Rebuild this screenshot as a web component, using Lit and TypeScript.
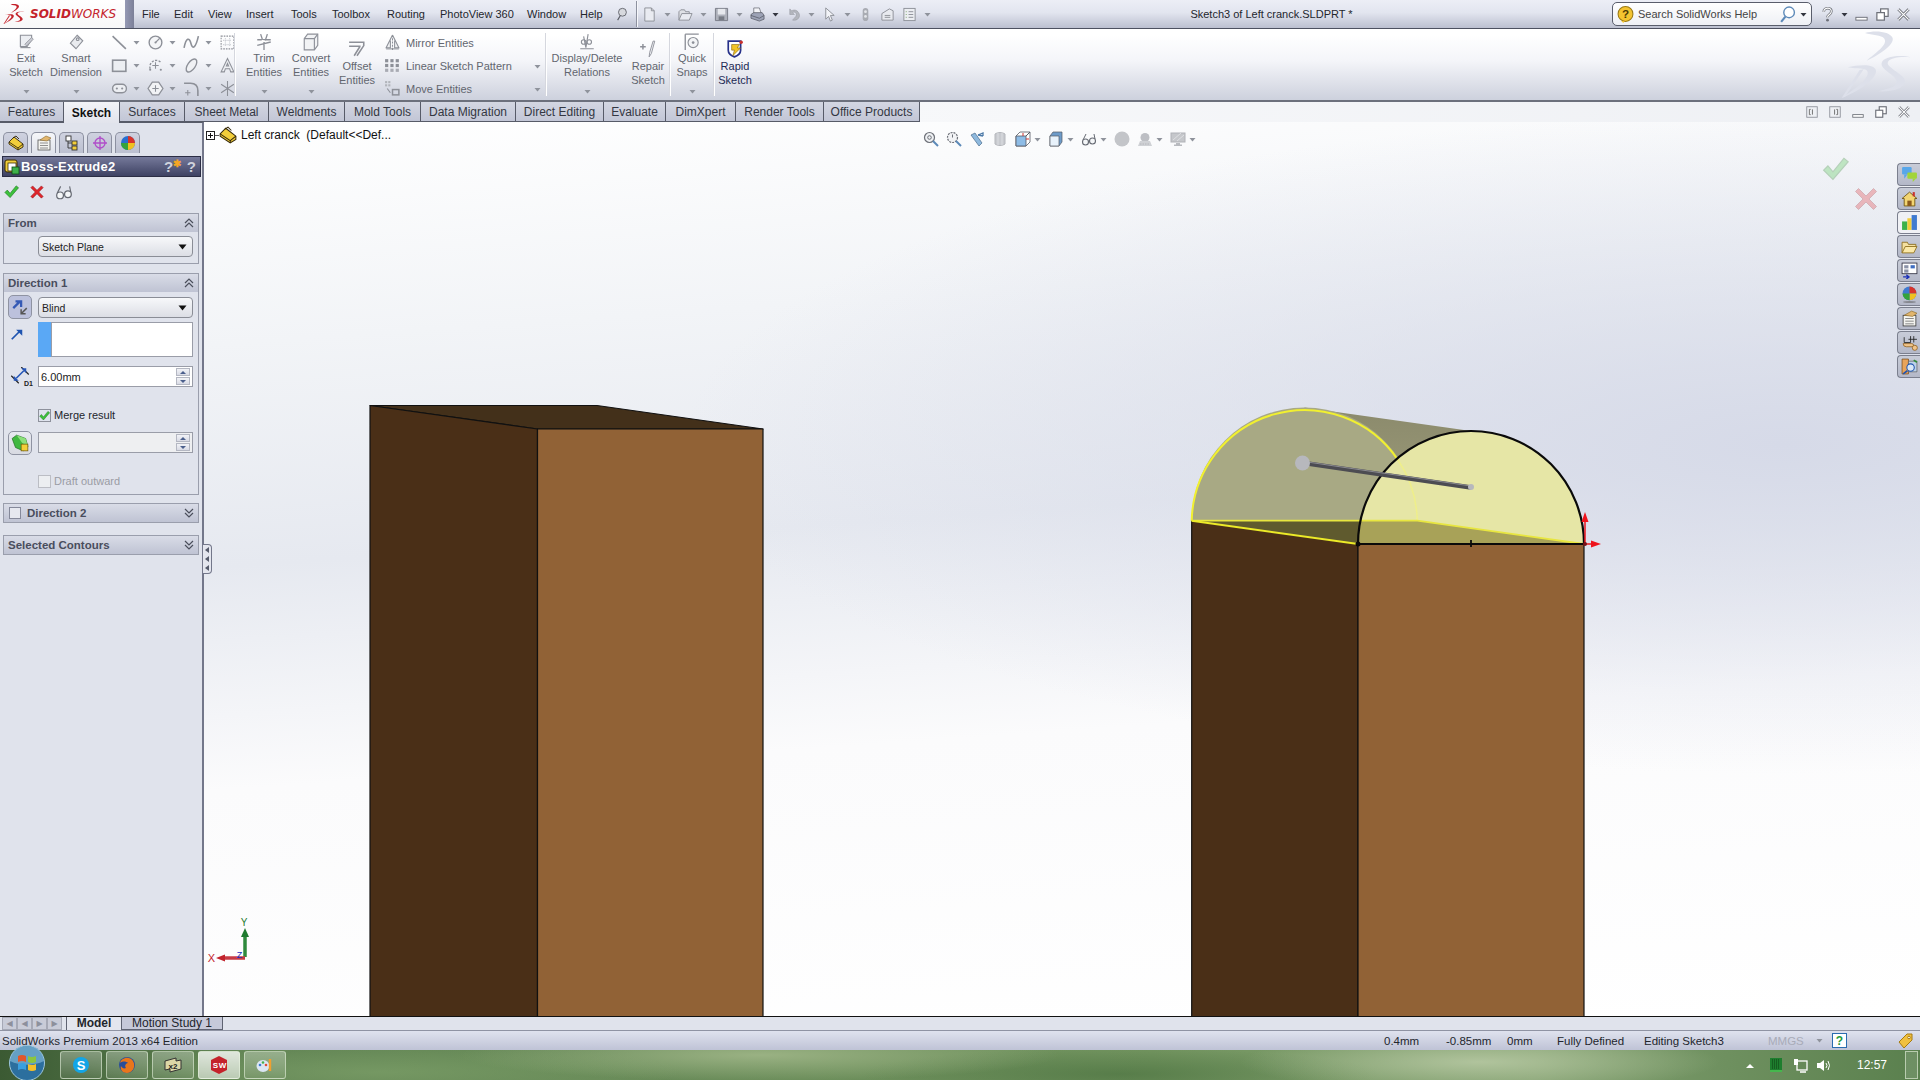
import { LitElement, html, svg, css, SVGTemplateResult } from 'lit';
import { customElement } from 'lit/decorators.js';

// small helpers for the icon set, everything is drawn on a 16 unit box
const ic = (size: number, body: SVGTemplateResult, box = '0 0 16 16') =>
  html`<svg class="ic" width=${size} height=${size} viewBox=${box}>${body}</svg>`;
const caret = html`<svg class="caret" width="7" height="5" viewBox="0 0 7 5"><path d="M0.5 1h6L3.5 4.5z" fill="#8f939c"/></svg>`;
const caretDark = html`<svg class="caret" width="7" height="5" viewBox="0 0 7 5"><path d="M0.5 1h6L3.5 4.5z" fill="#33363f"/></svg>`;
const selCaret = html`<svg class="caret" width="9" height="6" viewBox="0 0 9 6"><path d="M0.5 .5h8L4.500 5.500z" fill="#111"/></svg>`;
const G = '#8d9098';

const chevUp = html`<svg width="12" height="12" viewBox="0 0 12 12" fill="none" stroke="#4b4f5c" stroke-width="1.2"><path d="M2 6l4-4 4 4M2 10l4-4 4 4"/></svg>`;
const chevDown = html`<svg width="12" height="12" viewBox="0 0 12 12" fill="none" stroke="#4b4f5c" stroke-width="1.2"><path d="M2 2l4 4 4-4M2 6l4 4 4-4"/></svg>`;

// the 3DS mark, used red in the title bar and pale in the ribbon
const dsMark = svg`
  <path d="M120 15C150 6 195 10 203 30C208 50 165 80 125 98C150 75 190 50 178 32C170 20 140 22 120 15Z"/>
  <path d="M68 118C100 110 150 106 153 128C155 155 95 192 50 210C85 185 132 155 128 132C125 118 95 124 68 118Z"/>
  <path d="M104 126L116 124L62 204L50 210Z"/>
  <path d="M258 88C225 85 190 90 188 105C187 120 240 140 240 160C240 182 200 192 160 190C190 182 218 176 215 160C212 140 165 125 170 105C175 85 225 80 258 88Z"/>`;

const icons: Record<string, SVGTemplateResult> = {
  exit: svg`<path d="M3 2h10v4l-4 6H3z" fill="#eceef2" stroke=${G}/><path d="M3 13h9" stroke=${G}/><path d="M7 10l6-6 1.5 1.5-6 6z" fill="#c9cbd2" stroke=${G} stroke-width=".7"/>`,
  dim: svg`<path d="M9 2l5 5-6 7-5-5z" fill="#e9ebef" stroke=${G}/><circle cx="9.5" cy="5.5" r="1.2" fill="none" stroke=${G}/>`,
  line: svg`<path d="M1.5 2L14 14" stroke=${G} stroke-width="1.5"/>`,
  circle: svg`<circle cx="8" cy="8" r="6" fill="#f4f5f7" stroke=${G} stroke-width="1.3"/><path d="M8 8l4-4" stroke=${G}/><circle cx="8" cy="8" r="1" fill=${G}/>`,
  spline: svg`<path d="M1 13C3 3 6 3 7.5 9S12 13 14.5 2" fill="none" stroke=${G} stroke-width="1.5"/>`,
  plane: svg`<rect x="2" y="2" width="12" height="12" fill="none" stroke=${G} stroke-dasharray="1.5 1"/><path d="M4 6h8M4 10h8M6 4v8M10 4v8" stroke="#c2c5cc" stroke-dasharray="1 1"/>`,
  rect: svg`<rect x="1.5" y="3" width="12.5" height="10.5" fill="#eceef2" stroke=${G} stroke-width="1.5"/>`,
  arcs: svg`<path d="M3 11A6 6 0 0 1 13 5" fill="none" stroke=${G} stroke-dasharray="2 1.3" stroke-width="1.3"/><path d="M8 5v6M5 8h6" stroke=${G}/><circle cx="3" cy="12" r="1" fill=${G}/><circle cx="13" cy="12" r="1" fill=${G}/>`,
  ell: svg`<ellipse cx="8" cy="8" rx="3.6" ry="7" transform="rotate(35 8 8)" fill="#f0f1f4" stroke=${G} stroke-width="1.3"/>`,
  text: svg`<path d="M8 1.5L2 14h3l1-3h4l1 3h3zM7 8.5L8 6l1 2.5z" fill="#eceef2" stroke=${G}/>`,
  slot: svg`<rect x="1.5" y="4" width="13" height="8" rx="4" fill="#eceef2" stroke=${G} stroke-width="1.3"/><circle cx="5.5" cy="8" r="1" fill=${G}/><circle cx="10.5" cy="8" r="1" fill=${G}/>`,
  hex: svg`<path d="M5 2h6l4 6-4 6H5L1 8z" fill="#f2f3f5" stroke=${G} stroke-width="1.2"/><path d="M8 5v6M5 8h6" stroke=${G}/>`,
  fillet: svg`<path d="M1 3h6q7 0 7 7v5" fill="none" stroke=${G} stroke-width="1.5"/><path d="M2 12h5M4.500 9.500v5" stroke=${G}/>`,
  star: svg`<path d="M8 1v14M2 4l12 8M14 4L2 12" stroke=${G}/>`,
  trim: svg`<path d="M2 6h12M2 11l12-3M5 1l2 6M11 1L9 7M8 8v7" stroke=${G} stroke-width="1.2"/><path d="M6 6.500l4 1" stroke="#fff"/>`,
  conv: svg`<path d="M2 5l3-4h9v10l-3 4H2z" fill="#f2f3f5" stroke=${G}/><path d="M2 5h9v10M11 5l3-4" fill="none" stroke=${G}/>`,
  offset: svg`<path d="M1 2h13v3l-6 9M1 5.500h9.500v.5l-5 8" fill="none" stroke=${G} stroke-width="1.4"/>`,
  mirror: svg`<path d="M8 1L2 13h4V6M8 1l6 12h-4V6" fill="#f1f2f4" stroke=${G}/><path d="M8 1v14" stroke=${G} stroke-dasharray="2 1"/><path d="M2 14h12" stroke=${G}/>`,
  pattern: svg`<g fill=${G}><rect x="1" y="2" width="3" height="3"/><rect x="6" y="2" width="3" height="3"/><rect x="11" y="2" width="3" height="3"/><rect x="1" y="6.500" width="3" height="3"/><rect x="6" y="6.500" width="3" height="3"/><rect x="11" y="6.500" width="3" height="3"/><rect x="1" y="11" width="3" height="3" opacity=".7"/><rect x="6" y="11" width="3" height="3" opacity=".7"/><rect x="11" y="11" width="3" height="3" opacity=".7"/></g>`,
  move: svg`<g fill="#b1b4ba"><rect x="1" y="1" width="2" height="2"/><rect x="4" y="1" width="2" height="2"/><rect x="1" y="4" width="2" height="2"/><rect x="4" y="4" width="2" height="2"/></g><path d="M3 8l3 4" stroke=${G}/><rect x="8" y="9" width="6" height="5" fill="none" stroke=${G} stroke-width="1.4"/>`,
  rel: svg`<path d="M5 3l2 10M9 1l-2 12M2 14h12" stroke=${G} fill="none"/><circle cx="5" cy="8" r="2" fill="none" stroke=${G}/><circle cx="10" cy="8" r="2" fill="none" stroke=${G}/>`,
  repair: svg`<path d="M1 6h5M3.500 3.500v5" stroke=${G} stroke-width="1.3"/><path d="M14 1l-3 11-2 3 .5-4 3-10z" fill="#eceef2" stroke=${G} stroke-width=".8"/>`,
  snap: svg`<path d="M2 1h12M2 1v14" stroke=${G} stroke-width="1.2"/><circle cx="9" cy="8.500" r="4.500" fill="#f3f4f6" stroke=${G}/><circle cx="9" cy="8.500" r="1.200" fill=${G}/>`,
  rapid: svg`<path d="M2 1h11v8c0 3-3 5-5.500 6C5 14 2 12 2 9z" fill="#fff" stroke="#27318a" stroke-width="1.500"/><path d="M5 4h7l-2 3h3l-7 7 1.500-5H5z" fill="#f2c326" stroke="#7c5d08" stroke-width=".5"/><circle cx="13.500" cy="2" r="1.500" fill="#c9302c"/>`,
  pin: svg`<circle cx="8.500" cy="6" r="4.500" fill="#d7d9de" stroke="#5b5e66"/><path d="M6 10l-3 5" stroke="#5b5e66" stroke-width="1.300"/>`,
  newdoc: svg`<path d="M3 1h7l3 3v11H3z" fill="#e9ebf1" stroke=${G}/><path d="M10 1v3h3" fill="none" stroke=${G}/>`,
  open: svg`<path d="M1 14V5l2-2h4l1 2h4v2" fill="#dfe1e6" stroke=${G}/><path d="M1 14l3-7h11l-3 7z" fill="#e9ebf1" stroke=${G}/>`,
  save: svg`<path d="M1.500 1.500h13v13h-13z" fill="#adb0ba" stroke="#777b85"/><rect x="4" y="2" width="8" height="6" fill="#e6e8ed"/><rect x="5" y="10" width="6" height="4" fill="#777b85"/>`,
  print: svg`<path d="M4 1h6l2 6H4z" fill="#f2f3f7" stroke="#5a5d66" stroke-width=".7"/><path d="M1 8l3-2h9l2 3v4l-5 2-9-3z" fill="#9da3b6" stroke="#4b4e58" stroke-width=".7"/><path d="M1 9l9 3 5-3" fill="none" stroke="#4b4e58" stroke-width=".7"/>`,
  undo: svg`<path d="M4 2v6h5L7 6c3-1.500 5 1 3.500 4L7 14c6 1 9-4 6.500-8C11 2.500 8 3 6 4z" fill="#b3b6bd" stroke="#8d9098" stroke-width=".5"/>`,
  select: svg`<path d="M4 1v12l3-3 2 5 2-1-2-5h4z" fill="#f2f3f7" stroke=${G}/>`,
  rebuild: svg`<rect x="5" y="1" width="6" height="14" rx="3" fill="#a9acb3"/><circle cx="8" cy="5" r="1.500" fill="#e4e6ea"/><circle cx="8" cy="10" r="1.500" fill="#e4e6ea"/>`,
  optsIc: svg`<path d="M2 7l8-5 4 2v10H2z" fill="#e8eaef" stroke=${G}/><path d="M5 9h6M5 11h6" stroke=${G}/>`,
  list: svg`<rect x="2" y="1.500" width="12" height="13" fill="#eceef2" stroke=${G}/><path d="M7 5h5M7 8h5M7 11h5" stroke=${G}/><path d="M4 5h1M4 8h1M4 11h1" stroke="#7aa36a"/>`,
  zoomFit: svg`<circle cx="6.500" cy="6.500" r="5" fill="#eef0f3" stroke="#6d7078" stroke-width="1.200"/><circle cx="6.500" cy="6.500" r="1.800" fill="none" stroke="#6d7078"/><path d="M10 10l5 5" stroke="#5c89b8" stroke-width="2"/>`,
  zoomArea: svg`<circle cx="6.500" cy="6.500" r="5" fill="#f2f3f5" stroke="#6d7078" stroke-width="1.200" stroke-dasharray="2 1"/><path d="M6.500 3.500v3" stroke="#6d7078"/><path d="M10 10l5 5" stroke="#5c89b8" stroke-width="2"/>`,
  prevView: svg`<path d="M2 4l4-2 7 10-3 3z" fill="#8eb9de" stroke="#4a6b8c" stroke-width=".7"/><path d="M9 4l5-2v3M9 4l5 1" stroke="#4d7aa8" fill="none" stroke-width="1.300"/>`,
  section: svg`<path d="M3 3c3-2 7-2 10 0v10c-3 2-7 2-10 0z" fill="#c8cacf" stroke="#b5b7bc"/><path d="M6 2v12M10 2v12" stroke="#dcdee2"/>`,
  orient: svg`<path d="M1 5l4-4h10v10l-4 4H1z" fill="#fff" stroke="#555963" stroke-width=".8"/><path d="M1 5h10v10H1z" fill="#8ebce6" stroke="#555963" stroke-width=".8"/><path d="M11 5l4-4" stroke="#555963"/><path d="M8 2v3M11 8h3" stroke="#c33"/>`,
  disp: svg`<path d="M2 5l3-4h9v10l-3 4H2z" fill="#6d9bc9" stroke="#555963" stroke-width=".7"/><path d="M2 5h9v10H2z" fill="#e8f2fb" stroke="#555963" stroke-width=".7"/>`,
  glasses: svg`<circle cx="4.500" cy="11" r="3" fill="#f4f6f8" stroke="#666a73" stroke-width="1.100"/><circle cx="11.500" cy="10" r="3" fill="#f4f6f8" stroke="#666a73" stroke-width="1.100"/><path d="M2 9l3-6M7.500 10h1M14 8l-1-5" fill="none" stroke="#666a73"/>`,
  ball: svg`<circle cx="8" cy="8" r="7.500" fill="#c3c5c9"/>`,
  scene: svg`<circle cx="8" cy="6.500" r="4.500" fill="#bdbfc4"/><path d="M1 15l2-5h10l2 5z" fill="#cfd1d5"/><path d="M3 13h10" stroke="#b4b6bb" stroke-dasharray="1.500 1"/>`,
  monitor: svg`<rect x="1" y="2" width="14" height="9" fill="#c5c7cb" stroke="#b0b2b7"/><path d="M3 9l8-7M7 10l7-6" stroke="#dfe0e3"/><path d="M6 12h4v1.500h2V15H4v-1.500h2z" fill="#b8babf"/>`,
  winL: svg`<rect x="2" y="2" width="12" height="12" fill="#eef0f4" stroke=${G}/><path d="M6.500 5L5 5v6h1.500M8.500 5v6" fill="none" stroke="#666"/>`,
  winR: svg`<rect x="2" y="2" width="12" height="12" fill="#eef0f4" stroke=${G}/><path d="M9.500 5H11v6H9.500M7.500 5v6" fill="none" stroke="#666"/>`,
  min: svg`<rect x="2" y="11" width="12" height="3" fill="#fff" stroke="#6d7078"/>`,
  restore: svg`<rect x="6" y="2" width="8" height="8" fill="#fff" stroke="#6d7078" stroke-width="1.300"/><rect x="2" y="6" width="8" height="8" fill="#fff" stroke="#6d7078" stroke-width="1.300"/>`,
  close: svg`<path d="M2.500 2.500l11 11M13.500 2.500l-11 11" stroke="#6d7078" stroke-width="3"/><path d="M2.500 2.500l11 11M13.500 2.500l-11 11" stroke="#fff" stroke-width="1.300"/>`,
  helpQ: svg`<path d="M4 5c0-5 9-5 8 0 0 3-4 3-4 6" fill="none" stroke="#6d7078" stroke-width="2.800"/><path d="M4 5c0-5 9-5 8 0 0 3-4 3-4 6" fill="none" stroke="#fff" stroke-width="1.200"/><circle cx="8" cy="14" r="1.500" fill="#6d7078"/>`,
  bulb: svg`<circle cx="8" cy="7.500" r="7" fill="#f4c430" stroke="#9a7a14"/><text x="8" y="11.500" font-size="11" font-weight="700" text-anchor="middle" fill="#4b3b05" font-family="Liberation Sans">?</text><path d="M4 14l2 2 1-2z" fill="#f4c430"/>`,
  lens: svg`<circle cx="9.500" cy="6" r="5" fill="#fff" stroke="#5c89b8" stroke-width="1.300"/><path d="M6 10l-4 5" stroke="#5c89b8" stroke-width="2"/>`,
  block: svg`<path d="M1 7l5-5 9 7v3l-5 3-9-6z" fill="#f2ce3a" stroke="#33270a" stroke-width=".9"/><path d="M1 7l9 6 5-4M10 13v2M5 3l3-2 3 3" fill="none" stroke="#33270a" stroke-width=".9"/>`,
  prop: svg`<rect x="2" y="5" width="12" height="10" fill="#f4f4f0" stroke="#555" stroke-width=".8"/><path d="M4 8h8M4 10.500h8M4 13h8" stroke="#777" stroke-width=".8"/><path d="M4 5l6-4 5 2-4 3z" fill="#e2b66e" stroke="#8b6a2a" stroke-width=".6"/>`,
  config: svg`<rect x="2" y="1" width="5" height="5" fill="#fff" stroke="#333" stroke-width=".9"/><rect x="8" y="6" width="5" height="4" fill="#f2ce3a" stroke="#333" stroke-width=".9"/><rect x="8" y="11" width="5" height="4" fill="#f2ce3a" stroke="#333" stroke-width=".9"/><path d="M4 6v7h4M4 8h4" fill="none" stroke="#333" stroke-width=".9"/>`,
  target: svg`<circle cx="8" cy="8" r="5" fill="none" stroke="#b04ec9" stroke-width="1.300"/><path d="M8 1v14M1 8h14" stroke="#b04ec9" stroke-width="1.300"/>`,
  colors: svg`<circle cx="8" cy="8" r="7" fill="#2a6fd0"/><path d="M8 8V1a7 7 0 0 1 7 7z" fill="#d7342b"/><path d="M8 8h7a7 7 0 0 1-7 7z" fill="#f0c020"/><path d="M8 8v7a7 7 0 0 1-7-7z" fill="#35a33a"/>`,
  boss: svg`<rect x="1" y="1" width="12" height="12" rx="2" fill="#f2ce3a" stroke="#3a2d05"/><rect x="4" y="4" width="8" height="8" fill="#fff" stroke="#3a2d05" stroke-width=".8"/><rect x="8" y="8" width="7" height="7" fill="#3db14a" stroke="#0e4a16" stroke-width=".8"/>`,
  ok: svg`<path d="M1 9l2.500-2.500L6.500 10 13 2l2.500 2L6.500 14.500z" fill="#3cc23c" stroke="#1d7a1d" stroke-width=".7"/>`,
  no: svg`<path d="M3 1l5 5 5-5 2 2-5 5 5 5-2 2-5-5-5 5-2-2 5-5-5-5z" fill="#e0252b" stroke="#8e1015" stroke-width=".6"/>`,
  arrowsDir: svg`<path d="M2 9l6-6M4 3h5v5" fill="none" stroke="#3559b5" stroke-width="2"/><path d="M14 9l-5 5M13 14H9v-4" fill="none" stroke="#555" stroke-width="1.300"/>`,
  arrowBlue: svg`<path d="M2 14l10-10" stroke="#1f54b0" stroke-width="2"/><path d="M7 3h7v7z" fill="#1f54b0"/>`,
  d1: svg`<path d="M1 7l6 6M9 0l6 6" stroke="#222" stroke-width=".9"/><path d="M5 9l6-6" stroke="#2656b8" stroke-width="1.300"/><path d="M3 11l4 0-4-4zM13 1l-4 0 4 4z" fill="#2656b8"/>`,
  green: svg`<path d="M1 4l4-3 8 3 2 7-4 4-7-3z" fill="#41b841" stroke="#1f6b1f" stroke-width=".6"/><path d="M5 1l8 3 2 7-5-3z" fill="#8ce07a"/><rect x="9" y="9" width="6" height="6" fill="#f2ce3a" stroke="#6a5305" stroke-width=".6"/>`,
  chat: svg`<rect x="1" y="1" width="9" height="7" rx="1" fill="#58a7ea"/><path d="M3 8v4l3-4z" fill="#58a7ea"/><rect x="6" y="6" width="9" height="6" rx="1" fill="#a2d43a"/><path d="M11 12v3l3-3z" fill="#a2d43a"/>`,
  home: svg`<path d="M8 2L1 8h2v7h10V8h2z" fill="#f2d572" stroke="#6d5209" stroke-width=".8"/><rect x="11" y="2" width="2" height="4" fill="#c9302c"/><rect x="6" y="10" width="4" height="5" fill="#8c5a1c"/>`,
  library: svg`<rect x="1" y="7" width="5" height="8" fill="#3db14a"/><rect x="6" y="4" width="4" height="11" fill="#f2ce3a"/><rect x="10" y="1" width="5" height="14" fill="#3f7ad0"/>`,
  folder: svg`<path d="M1 14V4h5l1 2h7v2" fill="#f4e0a0" stroke="#8a6a18" stroke-width=".8"/><path d="M1 14l3-6h11l-3 6z" fill="#fbe9a8" stroke="#8a6a18" stroke-width=".8"/>`,
  views: svg`<rect x="1" y="1" width="14" height="10" fill="#fff" stroke="#334" stroke-width=".8"/><rect x="3" y="3" width="4" height="3" fill="#8c93a8"/><rect x="9" y="3" width="4" height="3" fill="#3f6ec2"/><rect x="3" y="7" width="4" height="3" fill="#8c93a8"/><path d="M2 14h5M5 12l2.500 2L5 16" stroke="#1b2fb8" stroke-width="1.300" fill="none"/>`,
  appearance: svg`<circle cx="8" cy="7" r="6.500" fill="#3f7ad0"/><path d="M8 7V.5A6.500 6.500 0 0 1 14.500 7z" fill="#d7342b"/><path d="M8 7h6.500A6.500 6.500 0 0 1 8 13.500z" fill="#f0c020"/><path d="M8 7v6.500A6.500 6.500 0 0 1 1.500 7z" fill="#35a33a"/><ellipse cx="8" cy="15" rx="6" ry="1" fill="#555" opacity=".5"/>`,
  custom: svg`<rect x="2" y="5" width="12" height="10" fill="#f4f4f0" stroke="#444" stroke-width=".8"/><path d="M4 8h8M4 10.500h8M4 13h8" stroke="#777" stroke-width=".8"/><path d="M3 5l7-4 5 2-4 3z" fill="#e2b66e" stroke="#8b6a2a" stroke-width=".6"/>`,
  sensor: svg`<path d="M3 3v5h6M9 2v6M12 2v6M7 5h8" stroke="#222" fill="none" stroke-width=".8"/><path d="M2 9h8q2 0 2 2v1H5q-3 0-3-3z" fill="#f1c489" stroke="#8a5a1a" stroke-width=".7"/><circle cx="13" cy="13" r="2.400" fill="#f1c489" stroke="#8a5a1a" stroke-width=".7"/>`,
  search: svg`<path d="M1 1h6v14H1z" fill="#e8a45a" stroke="#7a4a17" stroke-width=".7"/><path d="M7 3h8v10H7z" fill="#bcd1e8" stroke="#555" stroke-width=".6"/><circle cx="9" cy="9" r="3.500" fill="#d9e8f6" stroke="#1f54b0"/><path d="M6 12l-4 3" stroke="#1f54b0" stroke-width="1.500"/><path d="M12 2l3 2" stroke="#2f8b3a" stroke-width="1.500"/>`,
};

const menu: [string, number][] = [['File', 32], ['Edit', 34], ['View', 38], ['Insert', 45], ['Tools', 41], ['Toolbox', 55], ['Routing', 53], ['PhotoView 360', 87], ['Window', 53], ['Help', 42]];
const tabs: [string, number][] = [['Features', 64], ['Sketch', 56], ['Surfaces', 65], ['Sheet Metal', 84], ['Weldments', 76], ['Mold Tools', 76], ['Data Migration', 95], ['Direct Editing', 88], ['Evaluate', 62], ['DimXpert', 70], ['Render Tools', 88], ['Office Products', 96]];
const quick: [string, boolean][] = [['newdoc', true], ['open', true], ['save', true], ['print', true], ['undo', true], ['select', true], ['rebuild', false], ['optsIc', false], ['list', true]];
const huds: [string, boolean][] = [['zoomFit', false], ['zoomArea', false], ['prevView', false], ['section', false], ['orient', true], ['disp', true], ['glasses', true], ['ball', false], ['scene', true], ['monitor', true]];
const pane = ['chat', 'home', 'library', 'folder', 'views', 'appearance', 'custom', 'sensor', 'search'];
const grid = [['line', 'circle', 'spline', 'plane'], ['rect', 'arcs', 'ell', 'text'], ['slot', 'hex', 'fillet', 'star']];

@customElement('app-root')
export class AppRoot extends LitElement {
  static styles = css`
    :host { display: block; width: 1920px; height: 1080px; overflow: hidden; font-family: "Liberation Sans", "DejaVu Sans", sans-serif; font-size: 12px; color: #23262d; }
    .app { display: flex; flex-direction: column; width: 1920px; height: 1080px; }
    svg.ic { display: block; flex: none; }
    svg.caret { display: block; flex: none; }

    .title { height: 28px; flex: none; display: flex; align-items: center; font-size: 11px; background: linear-gradient(#eceef6, #e2e5ef 45%, #bcc0d0); border-bottom: 1px solid #4d5160; }
    .logo { width: 125px; height: 28px; flex: none; display: flex; align-items: center; gap: 5px; padding-left: 3px; box-sizing: border-box; background: linear-gradient(#fff, #f7f7f8); color: #c4222b; font: italic 400 12px "DejaVu Sans", sans-serif; white-space: nowrap; }
    .logo b { font-weight: 700; }
    .logo svg { fill: #c4222b; flex: none; }
    .strip { width: 9px; height: 28px; flex: none; margin-right: 8px; background: linear-gradient(90deg, #9599b4, #7c8098); }
    .menu { display: flex; align-items: center; height: 100%; }
    .menu span { display: block; }
    .pin { width: 14px; margin: 0 7px 0 -7px; }
    .vsep { width: 1px; height: 26px; background: #8d919f; border-right: 1px solid #f6f7fb; }
    .quick { display: flex; align-items: center; gap: 3px; }
    .q { display: flex; align-items: center; gap: 7px; padding-left: 4px; }
    .doc { flex: 1; text-align: center; white-space: nowrap; }
    .search { width: 200px; height: 24px; flex: none; box-sizing: border-box; display: flex; align-items: center; gap: 4px; padding: 0 4px; background: linear-gradient(#fff, #eef0f5); border: 1px solid #5a5e6c; border-radius: 5px; color: #444; white-space: nowrap; }
    .search .grow { flex: 1; }
    .wins { display: flex; align-items: center; gap: 6px; padding: 0 9px 0 8px; }

    .ribbon { height: 71px; flex: none; display: flex; font-size: 11px; background: linear-gradient(#fff 8%, #f4f5f9 45%, #cdd1dd); border-bottom: 2px solid #6c707c; position: relative; color: #62666f; line-height: 14px; text-align: center; }
    .tool { flex: none; display: flex; flex-direction: column; align-items: center; padding-top: 4px; box-sizing: border-box; position: relative; }
    .tool .lbl { white-space: nowrap; }
    .tool svg.caret { position: absolute; bottom: 6px; left: 50%; margin-left: -3px; }
    .tool.low { padding-top: 11px; }
    .tool.low .lbl { margin-top: 1px; }
    .tool.active { color: #1d2a55; }
    .sep { flex: none; width: 1px; margin: 4px 0; background: #d5d7de; border-right: 1px solid #fff; }
    .grid { flex: none; width: 123px; display: grid; grid-template-columns: 36px 36px 36px auto; grid-auto-rows: 23px; padding-top: 2px; box-sizing: border-box; margin-left: 11px; }
    .cell { display: flex; align-items: center; gap: 5px; }
    .stack { flex: none; width: 161px; display: flex; flex-direction: column; position: relative; padding-top: 2px; box-sizing: border-box; }
    .stack .row { height: 23px; display: flex; align-items: center; gap: 5px; white-space: nowrap; }
    .stack .c1, .stack .c2 { position: absolute; right: 4px; }
    .stack .c1 { top: 35px; }
    .stack .c2 { top: 58px; }
    .mark { position: absolute; right: 0; top: -1px; fill: #dde0ea; }

    .tabs { height: 20px; flex: none; display: flex; background: linear-gradient(90deg, #fff, #eef0f4); position: relative; }
    .tab { flex: none; box-sizing: border-box; height: 20px; display: flex; align-items: center; justify-content: center; background: linear-gradient(#d4d7e2, #c2c6d6); color: #333742; border: 1px solid #575b68; border-left-width: 0; border-top: 0; white-space: nowrap; }
    .tab.on { background: linear-gradient(#f2f3f7, #e2e4ec); font-weight: 700; color: #111; height: 21px; border-bottom: 0; position: relative; z-index: 1; }
    .tabs .wins { margin-left: auto; gap: 9px; padding-right: 9px; }

    .main { flex: 1; display: flex; min-height: 0; }
    .panel { width: 204px; flex: none; box-sizing: border-box; font-size: 11px; background: #e0e3ec; border-right: 2px solid #73778a; position: relative; padding: 9px 1px 0 2px; border-top: 1px solid #575b68; }
    .ptabs { display: flex; gap: 3px; height: 21px; padding-left: 1px; }
    .ptab { width: 25px; height: 21px; box-sizing: border-box; display: flex; align-items: center; justify-content: center; background: linear-gradient(#cfd2e0, #bcc0d0); border: 1px solid #8c90a0; border-bottom: 0; border-radius: 5px 5px 0 0; }
    .ptab.on { background: linear-gradient(#f5f6f9, #e0e3ec); }
    .pm { height: 21px; box-sizing: border-box; margin-top: 3px; display: flex; align-items: center; gap: 1px; padding: 0 4px 0 1px; background: linear-gradient(#75799a, #3e4263); color: #fff; font-weight: 700; font-size: 13px; letter-spacing: .2px; border: 1px solid #2b2d44; }
    .pm .grow { flex: 1; }
    .qm { color: #cfd2dc; font: 700 15px "Liberation Sans", sans-serif; }
    .qm b { color: #f6a623; font-size: 10px; vertical-align: top; }
    .acts { display: flex; align-items: center; gap: 11px; padding: 0 0 0 2px; height: 27px; box-sizing: border-box; margin-top: 1px; }
    .grp { margin: 0 2px 8px 1px; border: 1px solid #9a9eac; box-sizing: border-box; }
    .hd { height: 18px; display: flex; align-items: center; padding: 0 3px 0 4px; background: linear-gradient(#d9dce7, #bfc3d3); font-weight: 700; font-size: 11.500px; color: #494d5d; }
    .hd .grow { flex: 1; }
    .hd i { width: 12px; height: 12px; margin: 0 6px 0 1px; box-sizing: border-box; border: 1px solid #85899a; background: #e6e8ef; }
    .body { position: relative; padding: 4px 5px 6px 34px; box-sizing: border-box; }
    .sel { height: 21px; box-sizing: border-box; display: flex; align-items: center; justify-content: space-between; padding: 0 5px 0 3px; font-size: 10.500px; background: linear-gradient(#f7f8fa, #dcdee5); border: 1px solid #8a8d96; border-radius: 4px; color: #222; }
    .btn { position: absolute; left: 4px; width: 24px; height: 24px; box-sizing: border-box; display: flex; align-items: center; justify-content: center; border: 1px solid #8f93a2; border-radius: 5px; background: linear-gradient(#e8eaf0, #d8dae2); }
    .btn.on { background: #bcc1dc; }
    .side { position: absolute; left: 6px; }
    .d1 { position: absolute; left: 20px; top: 88px; font: 700 7px "Liberation Sans", sans-serif; color: #222; }
    .listbox { display: flex; height: 35px; margin-top: 4px; }
    .listbox b { width: 13px; background: #5aa8f5; flex: none; }
    .listbox div { flex: 1; background: #fff; border: 1px solid #9a9da8; }
    .num { height: 21px; box-sizing: border-box; margin-top: 9px; display: flex; align-items: center; background: #fff; border: 1px solid #9a9da8; padding: 0 2px; color: #222; }
    .num.off { background: #eeeff1; }
    .num .grow { flex: 1; }
    .spin { width: 14px; display: flex; flex-direction: column; gap: 1px; }
    .spin i { height: 8px; display: block; background: linear-gradient(#f2f3f7, #d8dae4); border: 1px solid #b4b7c2; box-sizing: border-box; position: relative; }
    .spin i::after { content: ""; position: absolute; left: 3px; top: 1.500px; border-left: 3px solid transparent; border-right: 3px solid transparent; }
    .spin i.u::after { border-bottom: 3px solid #4b5f8c; }
    .spin i.d::after { border-top: 3px solid #4b5f8c; }
    .chk { display: flex; align-items: center; gap: 3px; height: 14px; white-space: nowrap; }
    .chk i { width: 13px; height: 13px; box-sizing: border-box; flex: none; border: 1px solid #8e919c; background: #dfe3ee; display: flex; align-items: center; justify-content: center; }
    .chk.off { color: #9a9ca4; }
    .chk.off i { background: #eceef1; border-color: #bbbdc4; }
    .handle { position: absolute; right: -10px; top: 421px; width: 9px; height: 30px; background: #e4e6ee; border: 1px solid #73778a; border-left: 0; border-radius: 0 4px 4px 0; display: flex; flex-direction: column; align-items: center; justify-content: space-around; box-sizing: border-box; z-index: 2; }
    .handle i { width: 0; height: 0; border-top: 3px solid transparent; border-bottom: 3px solid transparent; border-right: 4px solid #555a6a; }

    .view { flex: 1; position: relative; overflow: hidden; background:
      radial-gradient(ellipse 1100px 330px at 92% 36%, #d6dae8 0%, rgba(214,218,232,0) 100%),
      linear-gradient(176deg, #fff 0%, #f2f4f7 22%, #e6e9f0 44%, #fbfbfc 66%, #fff 100%); }
    .scene { position: absolute; left: 0; top: 0; }
    .tree { position: absolute; left: 1px; top: 4px; display: flex; align-items: center; white-space: pre; color: #111; }
    .tree i { width: 9px; height: 9px; box-sizing: border-box; border: 1px solid #222; background: #fff; position: relative; flex: none; margin-left: 1px; }
    .tree i::before { content: ""; position: absolute; left: 1px; right: 1px; top: 3px; height: 1px; background: #111; }
    .tree i::after { content: ""; position: absolute; top: 1px; bottom: 1px; left: 3px; width: 1px; background: #111; }
    .tree u { width: 4px; height: 1px; background: #555; flex: none; }
    .tree span { margin-left: 4px; }
    .hud { position: absolute; left: 719px; top: 9px; display: flex; align-items: center; gap: 7px; }
    .h { display: flex; align-items: center; gap: 3px; }
    .confirm { position: absolute; opacity: .28; }
    .pane { position: absolute; right: 0; top: 41px; display: flex; flex-direction: column; gap: 1px; }
    .pb { width: 23px; height: 23px; box-sizing: border-box; display: flex; align-items: center; justify-content: center; background: linear-gradient(#c8ccd8, #b4b8c8); border: 1px solid #7b7f8e; border-right: 0; border-radius: 4px 0 0 4px; }
    .pb.on { background: #f0f1f5; }

    .models { height: 13px; flex: none; display: flex; background: #e0e3ec; border-top: 1px solid #111; border-bottom: 1px solid #8f93a3; }
    .nav { display: flex; margin: 0 4px 0 2px; }
    .nav span { width: 15px; height: 13px; box-sizing: border-box; border: 1px solid #a6a9b6; background: #c9ccd8; display: flex; align-items: center; justify-content: center; color: #8d909c; font-size: 8px; line-height: 1; }
    .mt { width: 55px; box-sizing: border-box; text-align: center; line-height: 13px; font-weight: 700; border-left: 1px solid #5f6372; background: #e4e6ee; }
    .mt.s { width: 102px; font-weight: 400; background: #c6c9d9; border: 1px solid #5f6372; border-top: 0; line-height: 12px; }

    .status { height: 19px; flex: none; display: flex; align-items: center; position: relative; font-size: 11.500px; background: linear-gradient(#dfe2ee, #bfc3d6); padding-left: 2px; white-space: nowrap; }
    .stats { position: absolute; left: 1384px; top: 0; height: 19px; display: flex; align-items: center; }
    .stats span { flex: none; }
    .taskbar { height: 30px; flex: none; display: flex; align-items: center; position: relative; background:
      radial-gradient(ellipse 240px 30px at 1480px 12px, rgba(185,202,165,.85), transparent),
      radial-gradient(ellipse 300px 26px at 760px 5px, rgba(170,190,145,.75), transparent),
      radial-gradient(ellipse 260px 26px at 1120px 24px, rgba(70,110,60,.6), transparent),
      radial-gradient(ellipse 300px 30px at 380px 22px, rgba(125,160,105,.7), transparent),
      linear-gradient(90deg, #3b5a33, #5f8252 12%, #72945f 60%, #82a070 80%, #5a804e); }
    .orb { position: absolute; left: 9px; top: -5px; width: 36px; height: 36px; }
    .tasks { display: flex; gap: 4px; margin-left: 60px; }
    .tb { width: 42px; height: 28px; box-sizing: border-box; display: flex; align-items: center; justify-content: center; border: 1px solid rgba(235,245,225,.55); border-radius: 3px; background: linear-gradient(rgba(255,255,255,.32), rgba(255,255,255,.08)); }
    .tb.on { background: linear-gradient(rgba(255,255,255,.8), rgba(255,255,255,.55)); }
    .tray { position: absolute; left: 1746px; top: 0; height: 30px; display: flex; align-items: center; color: #fff; }
    .clock { position: absolute; left: 111px; top: 8px; }
    .desk { position: absolute; right: 2px; top: 1px; width: 13px; height: 28px; border: 1px solid rgba(235,245,225,.6); box-sizing: border-box; background: rgba(255,255,255,.12); }
  `;

  tool(label: string, w: number, icon: string, caretOn = true, extra = '') {
    return html`<div class="tool ${extra}" style="width:${w}px">
      ${ic(18, icons[icon])}
      <div class="lbl">${label.split('|').map((l) => html`<div>${l}</div>`)}</div>
      ${caretOn ? caret : ''}
    </div>`;
  }

  renderTitle() {
    return html`<div class="title">
      <div class="logo">
        <svg width="22" height="24" viewBox="45 5 218 210">${dsMark}</svg>
        <span><b>SOLID</b>WORKS</span>
      </div>
      <div class="strip"></div>
      <div class="menu">${menu.map(([m, w]) => html`<span style="width:${w}px">${m}</span>`)}</div>
      <div class="pin">${ic(14, icons.pin)}</div>
      <div class="vsep"></div>
      <div class="quick">${quick.map(([n, c]) => html`<div class="q">${ic(15, icons[n])}${c ? (n === 'print' ? caretDark : caret) : ''}</div>`)}</div>
      <div class="doc">Sketch3 of Left cranck.SLDPRT *</div>
      <div class="search">${ic(17, icons.bulb)}<span>Search SolidWorks Help</span><span class="grow"></span>${ic(17, icons.lens)}${caretDark}</div>
      <div class="wins">${ic(15, icons.helpQ)}${caretDark}${ic(15, icons.min)}${ic(15, icons.restore)}${ic(15, icons.close)}</div>
    </div>`;
  }

  renderRibbon() {
    return html`<div class="ribbon">
      ${this.tool('Exit|Sketch', 52, 'exit')}
      ${this.tool('Smart|Dimension', 48, 'dim')}
      <div class="grid">
        ${grid.flat().map((n, i) => html`<div class="cell">${ic(17, icons[n])}${(i + 1) % 4 ? caret : ''}</div>`)}
      </div>
      <div class="sep"></div>
      ${this.tool('Trim|Entities', 56, 'trim')}
      ${this.tool('Convert|Entities', 38, 'conv')}
      ${this.tool('Offset|Entities', 54, 'offset', false, 'low')}
      <div class="stack">
        <div class="row">${ic(17, icons.mirror)}<span>Mirror Entities</span></div>
        <div class="row">${ic(17, icons.pattern)}<span>Linear Sketch Pattern</span></div>
        <div class="row">${ic(17, icons.move)}<span>Move Entities</span></div>
        <div class="c1">${caret}</div>
        <div class="c2">${caret}</div>
      </div>
      <div class="sep"></div>
      ${this.tool('Display/Delete|Relations', 80, 'rel')}
      ${this.tool('Repair|Sketch', 42, 'repair', false, 'low')}
      <div class="sep"></div>
      ${this.tool('Quick|Snaps', 42, 'snap')}
      <div class="sep"></div>
      ${this.tool('Rapid|Sketch', 40, 'rapid', false, 'low active')}
      <svg class="mark" width="95" height="76" viewBox="0 0 285 228">${dsMark}</svg>
    </div>`;
  }

  renderTabs() {
    return html`<div class="tabs">
      ${tabs.map(([t, w]) => html`<div class="tab ${t === 'Sketch' ? 'on' : ''}" style="width:${w}px">${t}</div>`)}
      <div class="wins">${ic(14, icons.winL)}${ic(14, icons.winR)}${ic(14, icons.min)}${ic(14, icons.restore)}${ic(14, icons.close)}</div>
    </div>`;
  }

  renderPanel() {
    return html`<div class="panel">
      <div class="ptabs">
        ${['block', 'prop', 'config', 'target', 'colors'].map((n, i) => html`<div class="ptab ${i === 1 ? 'on' : ''}">${ic(16, icons[n])}</div>`)}
      </div>
      <div class="pm">${ic(16, icons.boss)}<span>Boss-Extrude2</span><span class="grow"></span><span class="qm">?<b>✱</b></span><span class="qm" style="margin-left:4px">?</span></div>
      <div class="acts">${ic(15, icons.ok)}${ic(14, icons.no)}${ic(18, icons.glasses)}</div>

      <div class="grp" style="margin-top:8px;margin-bottom:9px">
        <div class="hd"><span>From</span><span class="grow"></span>${chevUp}</div>
        <div class="body" style="height:31px"><div class="sel">Sketch Plane ${selCaret}</div></div>
      </div>

      <div class="grp" style="height:222px">
        <div class="hd"><span>Direction 1</span><span class="grow"></span>${chevUp}</div>
        <div class="body" style="padding-top:5px">
          <div class="btn on" style="top:3px">${ic(18, icons.arrowsDir)}</div>
          <div class="sel">Blind ${selCaret}</div>
          <div class="side" style="top:35px">${ic(14, icons.arrowBlue)}</div>
          <div class="listbox"><b></b><div></div></div>
          <div class="side" style="top:75px">${ic(20, icons.d1)}</div>
          <span class="d1">D1</span>
          <div class="num"><span>6.00mm</span><span class="grow"></span><span class="spin"><i class="u"></i><i class="d"></i></span></div>
          <div class="chk" style="margin-top:21px"><i>${ic(11, icons.ok)}</i>Merge result</div>
          <div class="btn" style="top:139px">${ic(18, icons.green)}</div>
          <div class="num off" style="margin-top:10px"><span class="grow"></span><span class="spin"><i class="u"></i><i class="d"></i></span></div>
          <div class="chk off" style="margin-top:21px"><i></i>Draft outward</div>
        </div>
      </div>

      <div class="grp"><div class="hd"><i></i><span>Direction 2</span><span class="grow"></span>${chevDown}</div></div>
      <div class="grp" style="margin-top:12px"><div class="hd"><span>Selected Contours</span><span class="grow"></span>${chevDown}</div></div>
      <div class="handle"><i></i><i></i><i></i></div>
    </div>`;
  }

  renderScene() {
    // page coordinates, the model is a free canvas so it sits absolutely in the viewport
    return html`<svg class="scene" width="1716" height="894" viewBox="204 122 1716 894">
      <defs>
        <linearGradient id="side" x1="0" y1="0" x2="0" y2="1"><stop offset="0" stop-color="#8b8a6c"/><stop offset="1" stop-color="#a3a27e"/></linearGradient>
      </defs>
      <g stroke="#111" stroke-width="1.200" stroke-linejoin="round">
        <path d="M370 405.500L597 405.500L763 429L537.500 429Z" fill="#43301a"/>
        <path d="M370 405.500L537.500 429V1020H370Z" fill="#4a2f17"/>
        <path d="M537.500 429H763V1020H537.500Z" fill="#916236"/>
        <path d="M1191.700 520.700L1358 544V1020H1191.700Z" fill="#4a2f17"/>
        <path d="M1358 544H1584V1020H1358Z" fill="#916236"/>
      </g>
      <path d="M1304.500 407.500L1471 431L1584 544L1358 544L1300 460Z" fill="url(#side)"/>
      <path d="M1191.700 520.700A112.800 113.200 0 0 1 1417.300 520.700Z" fill="#a8a984"/>
      <path d="M1191.700 520.700H1417.300L1584 544H1358Z" fill="#5f5a2e"/>
      <path d="M1358 544A113 113 0 0 1 1584 544Z" fill="#e6e6a6"/>
      <path d="M1360 520.700H1417.300L1584 544H1358Z" fill="#a8a258"/>
      <path d="M1191.700 520.700A112.800 113.200 0 0 1 1398 460" fill="none" stroke="#f1f030" stroke-width="2"/>
      <path d="M1398 460A112.800 113.200 0 0 1 1417.300 520.700" fill="none" stroke="#efef8a" stroke-width="1.500"/>
      <path d="M1191.700 520.700H1417.300L1584 544" fill="none" stroke="#e8e640" stroke-width="1.800"/>
      <path d="M1191.700 520.700L1358 544" fill="none" stroke="#ecea28" stroke-width="2"/>
      <path d="M1358 544A113 113 0 0 1 1584 544" fill="none" stroke="#0a0a0a" stroke-width="2.200"/>
      <path d="M1358 544H1584M1471 540v7" stroke="#0a0a0a" stroke-width="1.800"/>
      <circle cx="1358" cy="544" r="2.500" fill="#0a0a0a"/>
      <path d="M1304 463L1471 487.500" stroke="#4c4c52" stroke-width="4.500"/>
      <path d="M1304 461.500L1471 486" stroke="#8a8a90" stroke-width="1"/>
      <circle cx="1302.500" cy="463" r="7.500" fill="#b7b8bd"/>
      <circle cx="1471" cy="487" r="3" fill="#b7b8bd"/>
      <path d="M1585 544V520" stroke="#e8141c" stroke-width="1.500"/>
      <path d="M1585 512l-3.500 10h7zM1601 544l-10-3.500v7z" fill="#f0141c"/>
      <path d="M1585 544h10" stroke="#e8141c" stroke-width="1.500"/>
      <circle cx="1585" cy="544" r="2" fill="#7a1118"/>
      <g>
        <path d="M245 957V936" stroke="#2f8a3d" stroke-width="3.500"/>
        <path d="M245 928l-4 9h8z" fill="#1f7a2f"/>
        <path d="M245 958H225" stroke="#c73a44" stroke-width="3.500"/>
        <path d="M216 958l9-3.500v7z" fill="#c2232c"/>
        <text x="244" y="926" font-size="10" text-anchor="middle" fill="#1f7a2f" font-family="Liberation Sans">Y</text>
        <text x="211.500" y="962" font-size="11" text-anchor="middle" fill="#c2232c" font-family="Liberation Sans">X</text>
        <text x="239.500" y="958" font-size="9" text-anchor="middle" fill="#2030c0" font-family="Liberation Sans">Z</text>
      </g>
    </svg>`;
  }

  renderView() {
    return html`<div class="view">
      ${this.renderScene()}
      <div class="tree"><i></i><u></u>${ic(18, icons.block)}<span>Left cranck  (Default&lt;&lt;Def...</span></div>
      <div class="hud">${huds.map(([n, c]) => html`<div class="h">${ic(16, icons[n])}${c ? caret : ''}</div>`)}</div>
      <div class="confirm" style="left:1618px;top:33px">${ic(27, icons.ok)}</div>
      <div class="confirm" style="left:1650px;top:65px">${ic(24, icons.no)}</div>
      <div class="pane">${pane.map((n, i) => html`<div class="pb ${i === 2 ? 'on' : ''}">${ic(17, icons[n])}</div>`)}</div>
    </div>`;
  }

  render() {
    return html`<div class="app">
      ${this.renderTitle()}
      ${this.renderRibbon()}
      ${this.renderTabs()}
      <div class="main">${this.renderPanel()}${this.renderView()}</div>
      <div class="models">
        <div class="nav"><span>◀</span><span>◀</span><span>▶</span><span>▶</span></div>
        <div class="mt">Model</div><div class="mt s">Motion Study 1</div>
      </div>
      <div class="status">
        <span>SolidWorks Premium 2013 x64 Edition</span>
        <div class="stats">
          <span style="width:62px">0.4mm</span><span style="width:61px">-0.85mm</span><span style="width:50px">0mm</span><span style="width:87px">Fully Defined</span><span style="width:124px">Editing Sketch3</span><span style="width:48px;color:#a8abb8">MMGS</span><span style="width:16px">${caret}</span>
          <span style="width:66px"><svg class="ic" width="15" height="15" viewBox="0 0 15 15"><rect x=".5" y=".5" width="14" height="14" fill="#fff" stroke="#2b6cb0"/><text x="7.500" y="12" font-size="12" font-weight="700" text-anchor="middle" fill="#1f9a3a" font-family="Liberation Sans">?</text></svg></span>
          <span><svg class="ic" width="16" height="16" viewBox="0 0 16 16"><path d="M1 9l8-8h5v6l-8 8z" fill="#f0c040" stroke="#a77b10"/><circle cx="11" cy="4.500" r="1.300" fill="#fff" stroke="#a77b10"/></svg></span>
        </div>
      </div>
      <div class="taskbar">
        <svg class="orb" viewBox="0 0 36 36">
          <circle cx="18" cy="18" r="17.500" fill="#2c6f9e" stroke="#9fc7dd"/>
          <path d="M1 16a17 15 0 0 1 34 0c-10 5-24 5-34 0z" fill="#8cc2e0" opacity=".6"/>
          <path d="M9 11q4-2 8 0v6q-4-2-8 0z" fill="#e2572c"/>
          <path d="M19 11q4 2 8 0v6q-4 2-8 0z" fill="#8cc63f"/>
          <path d="M9 19q4-2 8 0v6q-4-2-8 0z" fill="#3aa0e0"/>
          <path d="M19 19q4 2 8 0v6q-4 2-8 0z" fill="#f5c02a"/>
        </svg>
        <div class="tasks">
          <div class="tb"><svg class="ic" width="18" height="18" viewBox="0 0 18 18"><circle cx="9" cy="9" r="8" fill="#13a5e6"/><text x="9" y="13.500" font-size="13" font-weight="700" text-anchor="middle" fill="#fff" font-family="Liberation Sans">S</text></svg></div>
          <div class="tb"><svg class="ic" width="18" height="18" viewBox="0 0 18 18"><circle cx="9" cy="9" r="8" fill="#2a4d9a"/><path d="M2 7c1-5 9-8 13-2 3 5 0 12-6 12-5 0-7-4-6-7 1 2 3 3 5 2-2-2 0-5 2-5-2-2-6-2-8 0z" fill="#e8761c"/></svg></div>
          <div class="tb"><svg class="ic" width="18" height="18" viewBox="0 0 18 18"><path d="M1 5l11-3v3l5-1v9l-11 3v-3l-5 1z" fill="#dcd6a6" stroke="#333"/><text x="9" y="12.500" font-size="8" font-weight="700" text-anchor="middle" fill="#222" font-family="Liberation Sans">x2</text></svg></div>
          <div class="tb on"><svg class="ic" width="20" height="20" viewBox="0 0 20 20"><path d="M2 5l8-4 8 4v10l-8 4-8-4z" fill="#c4222b"/><text x="6.500" y="13" font-size="8" font-weight="700" text-anchor="middle" fill="#fff" font-family="Liberation Sans">S</text><text x="13.500" y="13" font-size="8" font-weight="700" text-anchor="middle" fill="#fff" font-family="Liberation Sans">W</text></svg></div>
          <div class="tb"><svg class="ic" width="18" height="18" viewBox="0 0 18 18"><ellipse cx="7" cy="10" rx="6.500" ry="6" fill="#dbe6f4"/><circle cx="4" cy="9" r="1.300" fill="#3a7bd5"/><circle cx="7" cy="6.500" r="1.300" fill="#46b04a"/><circle cx="10" cy="9" r="1.300" fill="#e04a3a"/><path d="M14 3v12" stroke="#f0a030" stroke-width="2.400"/></svg></div>
        </div>
        <div class="tray">
          <svg class="ic" width="8" height="5" viewBox="0 0 8 5"><path d="M0 5l4-4 4 4z" fill="#fff"/></svg>
          <svg class="ic" style="margin-left:16px" width="12" height="14" viewBox="0 0 12 14"><rect width="12" height="14" fill="#1e7e2e"/><path d="M0 13h12" stroke="#6df06d"/><path d="M2 2h8M2 4h8M2 6h8M2 8h8M2 10h8" stroke="#0c3e13" stroke-dasharray="1 1"/></svg>
          <svg class="ic" style="margin-left:11px" width="15" height="15" viewBox="0 0 15 15"><rect x="4" y="3" width="10" height="9" fill="none" stroke="#fff" stroke-width="1.300"/><rect x="1" y="1" width="4" height="6" fill="#fff"/><path d="M7 14h6" stroke="#fff" stroke-width="1.500"/></svg>
          <svg class="ic" style="margin-left:8px" width="15" height="15" viewBox="0 0 15 15"><path d="M1 5h3l4-3v11l-4-3H1z" fill="#fff"/><path d="M10 5q2 2.500 0 5M12 3q3 4.500 0 9" fill="none" stroke="#fff"/></svg>
          <span class="clock">12:57</span>
        </div>
        <div class="desk"></div>
      </div>
    </div>`;
  }
}
